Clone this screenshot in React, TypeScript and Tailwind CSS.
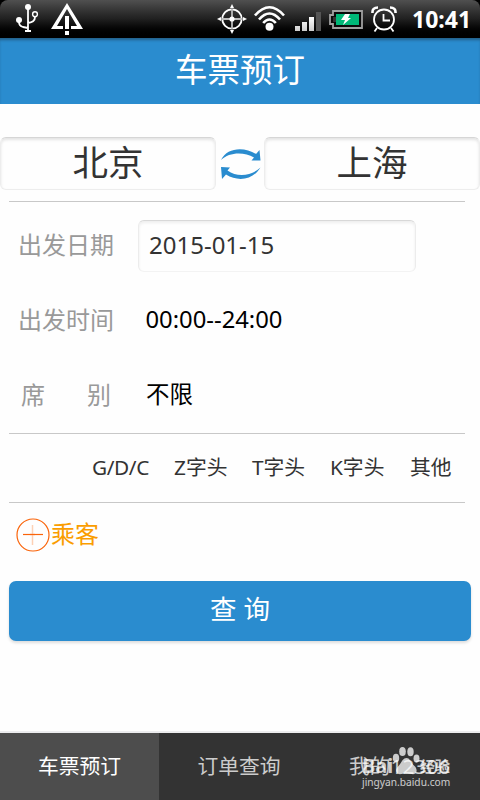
import type { ReactNode } from "react";

const trainTypes = [
  { label: "G/D/C", className: "w-[82px] tracking-[-0.4px]" },
  { label: "Z字头", className: "w-[78px]" },
  { label: "T字头", className: "w-[78px]" },
  { label: "K字头", className: "w-[80px]" },
  { label: "其他", className: "" },
];

function UsbIcon() {
  return (
    <svg width="24" height="32" viewBox="0 0 24 32" fill="none" stroke="#fff" strokeWidth="1.8">
      <circle cx="12" cy="5" r="3" fill="#fff" stroke="none" />
      <circle cx="3" cy="18" r="3" fill="#fff" stroke="none" />
      <circle cx="19" cy="12.2" r="2.4" strokeWidth="1.4" />
      <path d="M12 5v23M3 18v2q0 4 4 5l5 1M19 15q0 5-7 6" />
      <path d="M9 29h6" strokeWidth="2" />
    </svg>
  );
}

function WarningIcon() {
  return (
    <svg width="32" height="32" viewBox="0 0 32 32">
      <path fill="#fff" fillRule="evenodd" d="M16 0 32 26H20v-3h6L16 6 6 23h6v3H0z" />
      <path fill="#fff" d="M14 13h4v13h-4zM14 28h4v4h-4z" />
    </svg>
  );
}

function LocateIcon() {
  return (
    <svg width="30" height="30" viewBox="0 0 30 30" fill="none" stroke="#fff" strokeWidth="1.8">
      <circle cx="15" cy="15" r="9.7" />
      <path d="M15 5v20M5 15h20" stroke="#bbb" />
      <circle cx="15" cy="15" r="2.6" fill="#fff" stroke="none" />
      <path fill="#fff" stroke="none" d="M15 0l2 4h-4zM15 30l2-4h-4zM0 15l4-2v4zM30 15l-4-2v4z" />
    </svg>
  );
}

function WifiIcon() {
  return (
    <svg width="31" height="26" viewBox="0 0 31 26" fill="none" stroke="#fff" strokeWidth="2.6">
      <path d="M1 10.500Q15.500-6 30 10.500" />
      <path d="M5 14.500Q15.500 2.500 26 14.500" />
      <path d="M9.200 18Q15.500 11 21.800 18" />
      <circle cx="15.500" cy="21.800" r="4" fill="#fff" stroke="none" />
    </svg>
  );
}

function SignalIcon() {
  return (
    <svg width="26" height="19" viewBox="0 0 26 19">
      <defs>
        <linearGradient id="bar" x1="0" y1="0" x2="0" y2="1">
          <stop offset="0" stopColor="#fff" />
          <stop offset="1" stopColor="#ccc" />
        </linearGradient>
      </defs>
      <path fill="url(#bar)" d="M0 14h5v5H0zM7 10h5v9H7zM14 5h5v14h-5z" />
      <path fill="#555" d="M21 0h5v19h-5z" />
    </svg>
  );
}

function BatteryIcon() {
  return (
    <svg width="34" height="19" viewBox="0 0 34 19">
      <path fill="#0a0a0a" stroke="#a0a0a0" strokeWidth="1.800" d="M4 1h29v17H4v-4H1V5h3z" />
      <path fill="#333" d="M4 7h3v5H4z" />
      <path fill="#00b878" d="M7 4h23v11H7z" />
      <path fill="#fff" d="M16 4h5l-2 4h3l-8 7 2-5h-4z" />
    </svg>
  );
}

function AlarmIcon() {
  return (
    <svg width="26" height="26" viewBox="0 0 26 26" fill="none" stroke="#fff" strokeWidth="1.800">
      <circle cx="13" cy="13.500" r="10" />
      <path d="M12.500 8v6.500H19M6 22l-2.500 3.500M20 22l2.500 3.500" />
      <path d="M1.500 7Q1 1.500 7 1.500M24.500 7Q25 1.500 19 1.500" strokeWidth="2.600" />
    </svg>
  );
}

function SwapIcon() {
  return (
    <svg width="41" height="31" viewBox="0 0 41 31" fill="#2a8ccf">
      <path d="M1 11C7-1.500 24-2.500 36 5L39.500 1 40.500 11.500 31.500 11.500 34 8.500C24 2.500 9 3 1 11z" />
      <path d="M40.500 18.500C33 31 18 33 6 25.500L2 30 1 18 10 18.500 7.500 21.500C17 28.500 31 27.500 40.500 18.500z" />
    </svg>
  );
}

function StatusBar() {
  return (
    <div className="bg-black">
      <div className="flex h-[38px] items-start rounded-t-lg bg-linear-to-b from-[#505050] via-[#202020] via-50% to-black pl-4">
        <div className="pt-0.5"><UsbIcon /></div>
        <div className="ml-[11px] pt-[3px]"><WarningIcon /></div>
        <div className="ml-[134px] pt-1"><LocateIcon /></div>
        <div className="ml-[7px] pt-[5px]"><WifiIcon /></div>
        <div className="ml-[10px] pt-3"><SignalIcon /></div>
        <div className="ml-2 pt-[10px]"><BatteryIcon /></div>
        <div className="ml-2 pt-1.5"><AlarmIcon /></div>
        <span className="ml-[15px] text-[23px] leading-[39px] font-bold text-white">10:41</span>
      </div>
    </div>
  );
}

function City({ name }: { name: string }) {
  return (
    <div className="h-[53px] w-[216px] rounded-md border border-[#ededed] border-t-[#d6d6d6] text-center text-[35.500px] leading-[48px] text-[#333] shadow-[inset_0_2px_3px_#e4e4e4]">
      {name}
    </div>
  );
}

function Row({ label, children }: { label: ReactNode; children: ReactNode }) {
  return (
    <div className="flex h-[75px] items-center pl-[18px]">
      <div className="w-[120px] text-[#999]">{label}</div>
      {children}
    </div>
  );
}

function Watermark() {
  return (
    <div className="absolute top-[13px] left-[43px] w-[88px] text-white opacity-75">
      <svg className="absolute top-0 left-[30px]" width="28" height="29" viewBox="0 0 28 29" fill="currentColor">
        <ellipse cx="10.500" cy="5.500" rx="3.300" ry="4.600" />
        <ellipse cx="18.500" cy="5.800" rx="3.200" ry="4.500" />
        <ellipse cx="4" cy="12" rx="3.200" ry="4.300" />
        <ellipse cx="24.500" cy="12.500" rx="3" ry="4" />
        <path d="M14.500 12c-4 0-5 5-8 8-5 5-1 9 3 8 4-1 6-1 10 0 5 1 7-4 3-8-4-3-4-8-8-8z" />
      </svg>
      <div className="flex h-[29px] items-end justify-between text-[15px] leading-[18px] font-bold">
        <span className="text-[20px]">Bai</span>
        <span>经验</span>
      </div>
      <div className="text-center text-[10.200px] leading-[15px]">jingyan.baidu.com</div>
    </div>
  );
}

export default function App() {
  return (
    <main className="flex h-[800px] w-[480px] flex-col bg-[#fefefe] font-['Noto_Sans','Noto_Sans_CJK_SC',sans-serif] text-[24px] leading-none">
      <StatusBar />
      <header className="h-[66px] bg-[#2a8ccf] text-center text-[32.500px] leading-[64px] text-white shadow-[inset_0_3px_3px_-1px_#235f88]">
        车票预订
      </header>

      <section className="mt-[33px] flex items-start justify-between">
        <City name="北京" />
        <div className="pt-3"><SwapIcon /></div>
        <City name="上海" />
      </section>

      <section className="mt-[11px] mr-[15px] ml-[9px] h-[233px] border-y border-[#c8c8c8] pt-[5px]">
        <div className="-ml-[9px]">
          <Row label="出发日期">
            <div className="mt-[2px] h-[52px] w-[278px] rounded-md border border-[#ececec] border-t-[#d8d8d8] border-b-[#f3f3f3] pl-[10px] leading-[47px] text-[#333] shadow-[inset_0_2px_3px_#eee]">
              2015-01-15
            </div>
          </Row>
          <Row label="出发时间">
            <div className="pl-[7.500px] text-[23.800px] text-black">00:00--24:00</div>
          </Row>
          <Row
            label={
              <div className="flex justify-between pr-[27px] pl-[3px]">
                <span>席</span>
                <span>别</span>
              </div>
            }
          >
            <div className="pl-2 text-[23.500px] text-black">不限</div>
          </Row>
        </div>
      </section>

      <section className="mr-[15px] ml-[9px] flex h-[69px] items-center border-b border-[#c8c8c8] pb-px pl-[83px] text-[20.800px] text-[#333]">
        {trainTypes.map((type) => (
          <span key={type.label} className={type.className}>
            {type.label}
          </span>
        ))}
      </section>

      <div className="flex h-[64px] items-center pl-4 text-[#fa9d00]">
        <svg width="34" height="34" viewBox="0 0 34 34" fill="none" stroke="#fa640a">
          <circle cx="17" cy="17" r="16" strokeWidth="1.200" />
          <path d="M7 16.500h20" strokeWidth="1.200" />
          <path d="M16.500 7v20" stroke="#fdd0b4" strokeWidth="1.500" />
          <path d="M14 16.500h5" strokeWidth="1.200" />
        </svg>
        <span className="ml-px pb-0.5">乘客</span>
      </div>

      <button className="mx-[9px] mt-[14px] h-[60px] rounded-[7px] bg-[#2a8ccf] pb-[3px] text-[26.500px] leading-[57px] text-white shadow-[0_2px_3px_#ddd]">
        查 询
      </button>

      <nav className="mt-auto flex h-[69px] border-t-2 border-[#ececee] bg-[#333] text-center text-[20.800px] leading-[66px] text-[#ccc]">
        <div className="w-[159px] bg-[#4d4d4d] text-white">车票预订</div>
        <div className="w-[160px]">订单查询</div>
        <div className="relative w-[161px]">
          我的12306
          <Watermark />
        </div>
      </nav>
    </main>
  );
}
